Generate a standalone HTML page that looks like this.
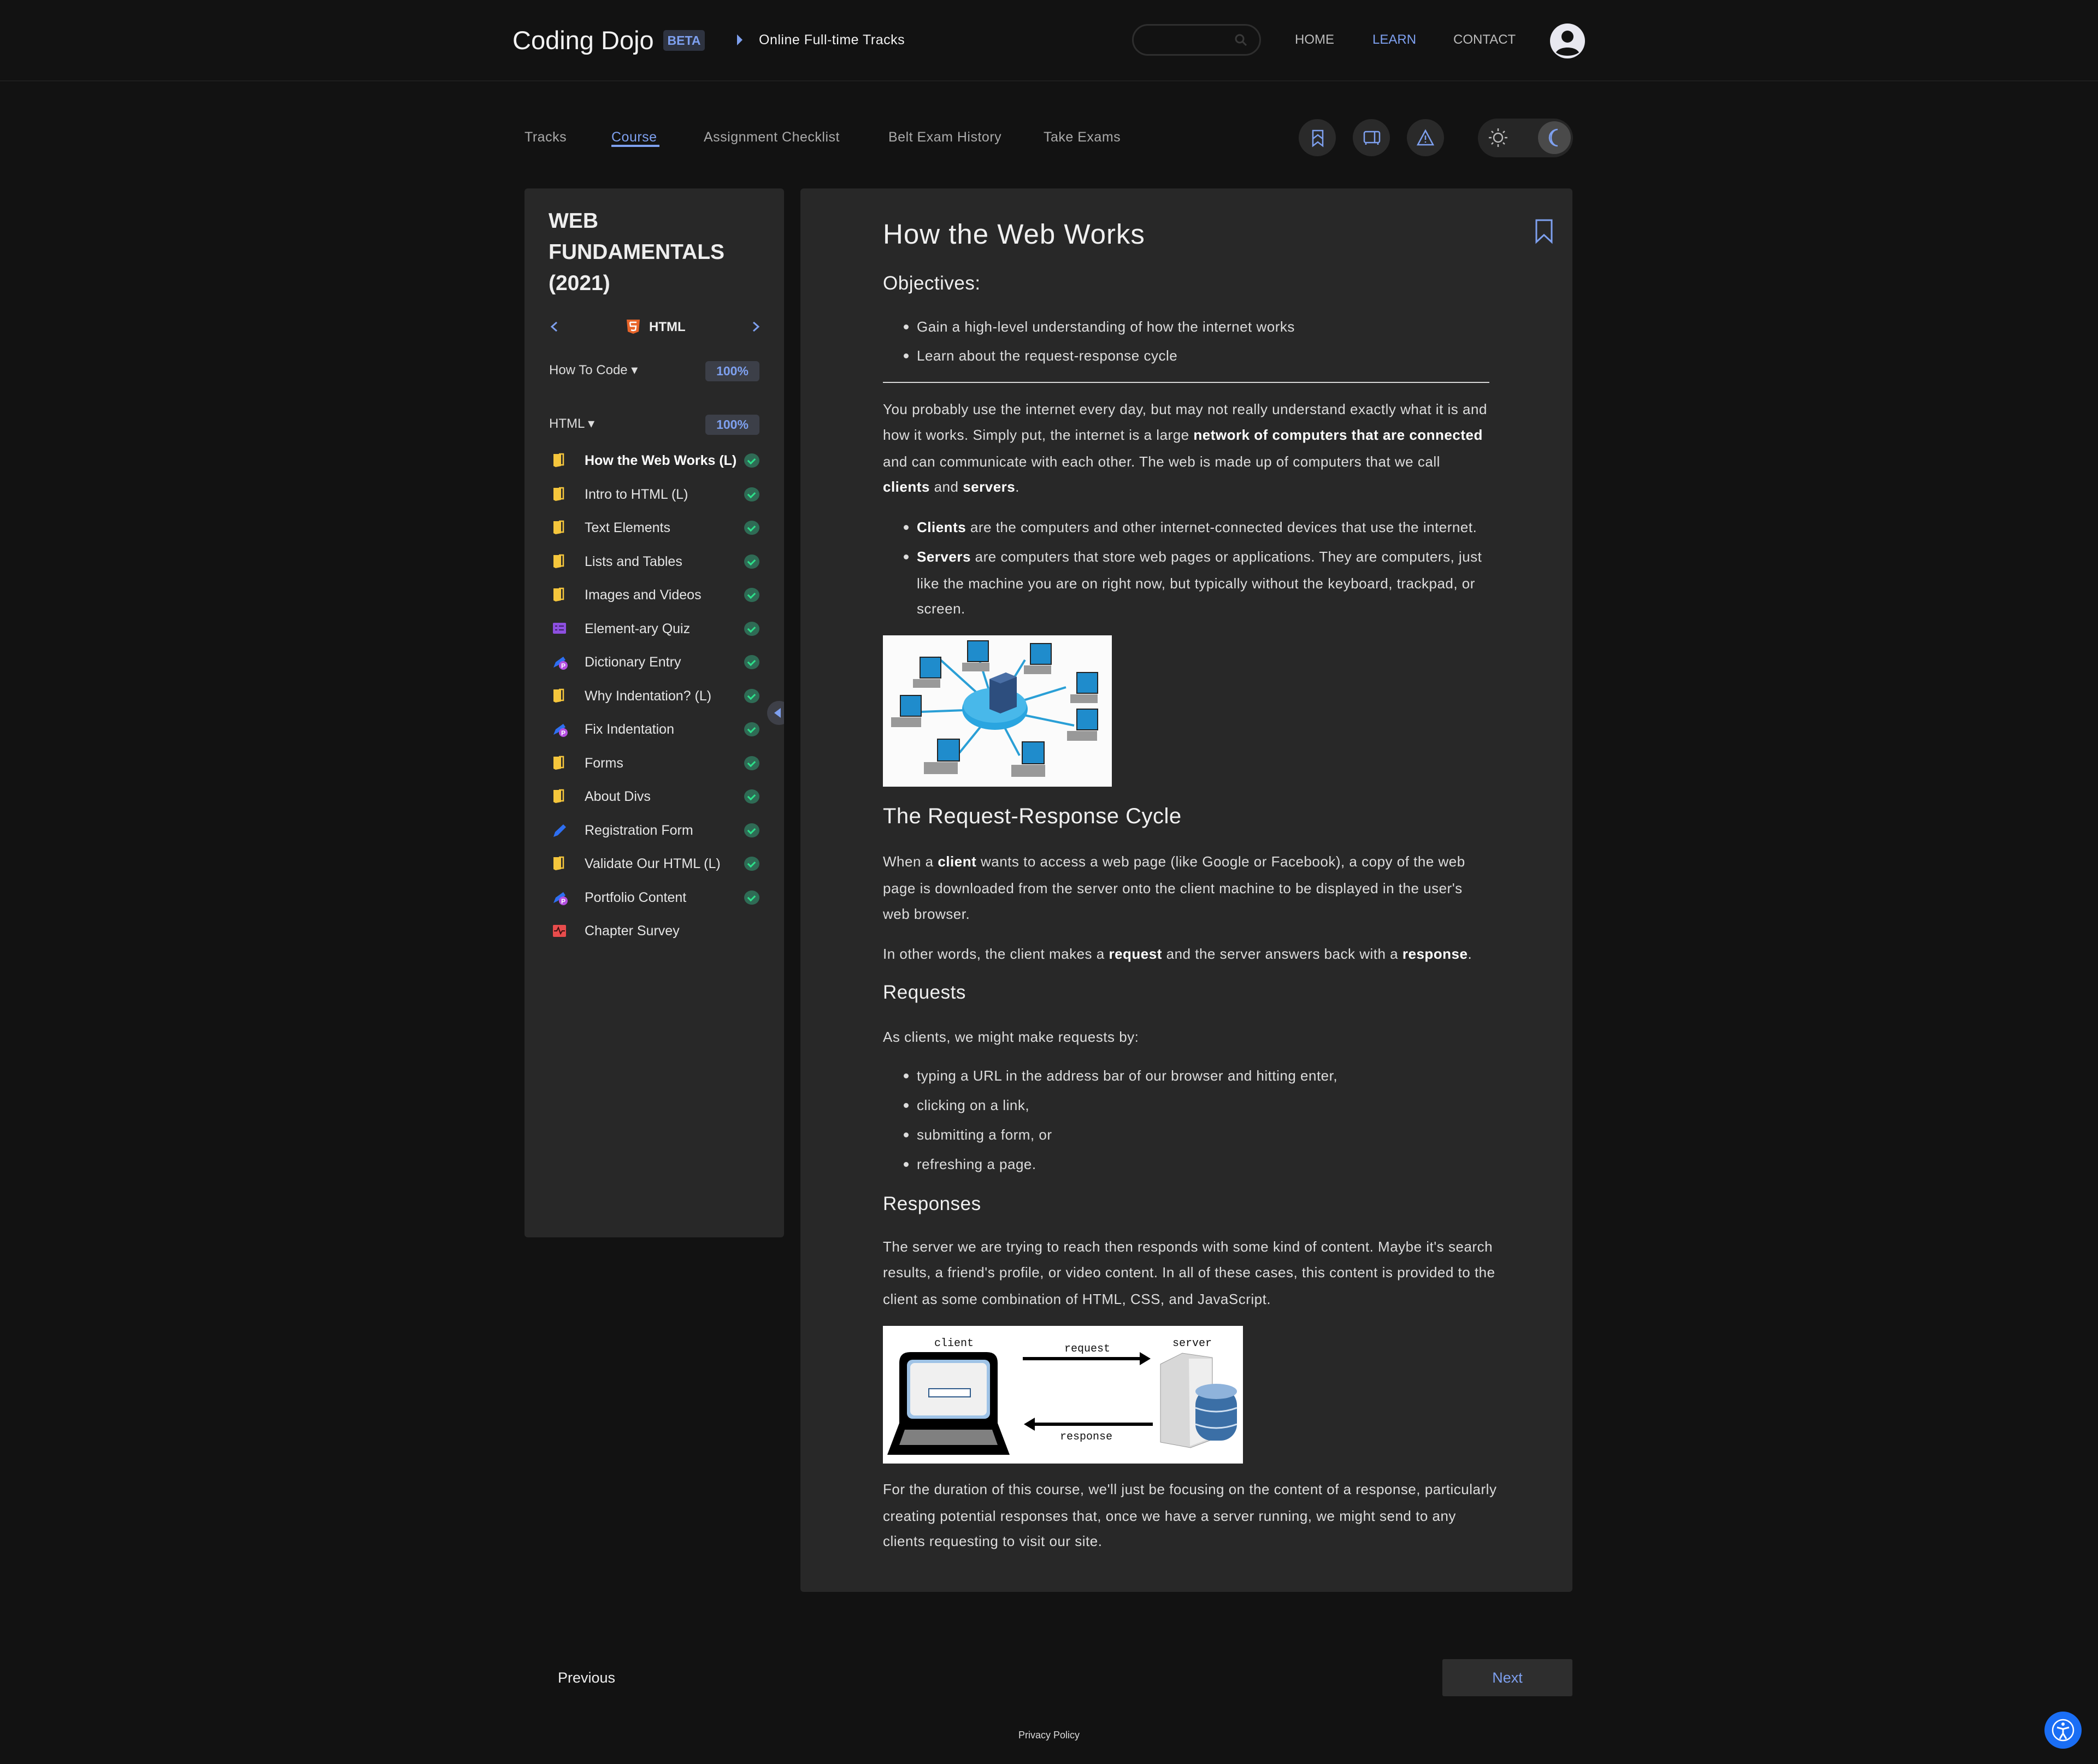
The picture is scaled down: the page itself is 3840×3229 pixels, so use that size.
<!DOCTYPE html>
<html><head><meta charset="utf-8">
<style>
*{margin:0;padding:0;box-sizing:border-box}
html,body{width:3840px;height:3229px;background:#121212;overflow:hidden;font-family:"Liberation Sans",sans-serif;color:#ddd}
.a{position:absolute;white-space:nowrap}
.t{position:absolute;white-space:nowrap;font-size:26px;letter-spacing:0.5px;line-height:48px;color:#ddd;left:1616px}
.t b{color:#fff}
.li{left:1678px}
.dot{position:absolute;width:9px;height:9px;border-radius:50%;background:#ddd;left:1654px}
.side{position:absolute;left:960px;top:345px;width:475px;height:1920px;background:#282828;border-radius:6px}
.main{position:absolute;left:1465px;top:345px;width:1413px;height:2569px;background:#282828;border-radius:6px}
.item{position:absolute;left:1070px;font-size:25px;line-height:40px;color:#e6e6e6;white-space:nowrap}
.chk{position:absolute;left:1362px;width:28px;height:26px;border-radius:50%;background:#2f6b55}
.chk:after{content:"";position:absolute;left:9px;top:6px;width:6px;height:10px;border:solid #2de08a;border-width:0 3px 3px 0;transform:rotate(45deg)}
.ic{position:absolute;left:1011px}
.circ{position:absolute;width:68px;height:68px;border-radius:50%;background:#2a2a2a;top:218px}
.tab{position:absolute;top:236px;font-size:25px;letter-spacing:0.5px;color:#aaa;line-height:30px;white-space:nowrap}
</style></head><body>
<!-- header -->
<div class="a" style="left:938px;top:44px;font-size:47px;color:#f2f2f2;line-height:60px">Coding Dojo</div>
<div class="a" style="left:1214px;top:55px;width:76px;height:38px;background:#2e3340;border-radius:5px;color:#7ea0ef;font-size:23px;font-weight:bold;text-align:center;line-height:38px">BETA</div>
<div class="a" style="left:1349px;top:63px;width:0;height:0;border-left:10px solid #7ea0ef;border-top:10px solid transparent;border-bottom:10px solid transparent"></div>
<div class="a" style="left:1389px;top:58px;font-size:25px;letter-spacing:0.5px;color:#f2f2f2;line-height:30px">Online Full-time Tracks</div>
<div class="a" style="left:2072px;top:44px;width:236px;height:58px;border:3px solid #2e2e2e;border-radius:29px"></div>
<svg class="a" style="left:2258px;top:60px" width="26" height="26" viewBox="0 0 26 26"><circle cx="11" cy="11" r="7" fill="none" stroke="#3a3a3a" stroke-width="3"/><path d="M16 16l7 7" stroke="#3a3a3a" stroke-width="3"/></svg>
<div class="a" style="left:2370px;top:58px;font-size:24px;color:#bbb;line-height:30px">HOME</div>
<div class="a" style="left:2512px;top:58px;font-size:24px;color:#7ea0ef;line-height:30px">LEARN</div>
<div class="a" style="left:2660px;top:58px;font-size:24px;color:#bbb;line-height:30px">CONTACT</div>
<svg class="a" style="left:2836px;top:42px" width="66" height="66" viewBox="0 0 66 66"><circle cx="33" cy="33" r="32" fill="#e8e8f0"/><circle cx="33" cy="25" r="11" fill="#121212"/><path d="M12 54c6-12 36-12 42 0c-10 8-32 8-42 0z" fill="#121212"/></svg>
<div class="a" style="left:0;top:147px;width:3840px;height:2px;background:#1e1e1e"></div>
<!-- tabs -->
<div class="tab" style="left:960px">Tracks</div>
<div class="tab" style="left:1119px;color:#7ea0ef">Course</div>
<div class="a" style="left:1119px;top:265px;width:88px;height:4px;background:#7ea0ef"></div>
<div class="tab" style="left:1288px">Assignment Checklist</div>
<div class="tab" style="left:1626px">Belt Exam History</div>
<div class="tab" style="left:1910px">Take Exams</div>
<div class="circ" style="left:2377px"></div><div class="circ" style="left:2476px"></div><div class="circ" style="left:2575px"></div>
<svg class="a" style="left:2398px;top:236px" width="28" height="34" viewBox="0 0 28 34"><path d="M5 3h18v28l-9-7-9 7z M5 18l9-7 9 7" fill="none" stroke="#7ea0ef" stroke-width="2.5"/></svg>
<svg class="a" style="left:2494px;top:238px" width="34" height="30" viewBox="0 0 34 30"><rect x="3" y="3" width="28" height="20" rx="3" fill="none" stroke="#7ea0ef" stroke-width="2.5"/><path d="M22 3v20M6 23v4M28 23v4" stroke="#7ea0ef" stroke-width="2.5"/></svg>
<svg class="a" style="left:2592px;top:236px" width="34" height="32" viewBox="0 0 34 32"><path d="M17 3L31 29H3z M17 12v8M17 23v2" fill="none" stroke="#7ea0ef" stroke-width="2.5"/></svg>
<div class="a" style="left:2705px;top:217px;width:174px;height:71px;border-radius:36px;background:#262626"></div>
<svg class="a" style="left:2722px;top:232px" width="40" height="40" viewBox="0 0 40 40"><circle cx="20" cy="20" r="8" fill="none" stroke="#bbb" stroke-width="2.5"/><path d="M20 3v5M20 32v5M3 20h5M32 20h5M8 8l3 3M29 29l3 3M8 32l3-3M29 11l3-3" stroke="#bbb" stroke-width="2.5"/></svg>
<div class="a" style="left:2815px;top:222px;width:60px;height:60px;border-radius:50%;background:#4a4a4a"></div>
<svg class="a" style="left:2825px;top:232px" width="40" height="40" viewBox="0 0 40 40"><path d="M26 5a15 15 0 1 0 0 30a12 15 0 0 1 0-30z" fill="none" stroke="#7ea0ef" stroke-width="2.5"/></svg>
<!-- sidebar -->
<div class="side"></div>
<div class="a" style="left:1004px;top:376px;font-size:39px;line-height:57px;color:#eee;font-weight:bold;white-space:normal">WEB<br>FUNDAMENTALS<br>(2021)</div>
<svg class="a" style="left:1006px;top:587px" width="16" height="22" viewBox="0 0 16 22"><path d="M13 3L4 11l9 8" fill="none" stroke="#7ea0ef" stroke-width="3"/></svg>
<svg class="a" style="left:1376px;top:587px" width="16" height="22" viewBox="0 0 16 22"><path d="M3 3l9 8-9 8" fill="none" stroke="#7ea0ef" stroke-width="3"/></svg>
<svg class="a" style="left:1146px;top:584px" width="26" height="28" viewBox="0 0 26 28"><path d="M1 1h24l-2 22-10 4-10-4z" fill="#e8652a"/><path d="M7 6h12M7 6l1 7h10l-1 7-4 1-4-1" fill="none" stroke="#fff" stroke-width="2.5"/></svg>
<div class="a" style="left:1188px;top:584px;font-size:24px;color:#eee;font-weight:bold;line-height:30px">HTML</div>
<div class="a" style="left:1005px;top:663px;font-size:24px;color:#ddd;line-height:30px">How To Code ▾</div>
<div class="a" style="left:1291px;top:661px;width:99px;height:37px;border-radius:6px;background:#3c3f48;color:#7ea0ef;font-size:23px;font-weight:bold;text-align:center;line-height:37px">100%</div>
<div class="a" style="left:1005px;top:761px;font-size:24px;color:#ddd;line-height:30px">HTML ▾</div>
<div class="a" style="left:1291px;top:759px;width:99px;height:37px;border-radius:6px;background:#3c3f48;color:#7ea0ef;font-size:23px;font-weight:bold;text-align:center;line-height:37px">100%</div>

<div class="item" style="top:823px;font-weight:bold;color:#fff">How the Web Works (L)</div>
<div class="item" style="top:885px">Intro to HTML (L)</div>
<div class="item" style="top:946px">Text Elements</div>
<div class="item" style="top:1008px">Lists and Tables</div>
<div class="item" style="top:1069px">Images and Videos</div>
<div class="item" style="top:1131px">Element-ary Quiz</div>
<div class="item" style="top:1192px">Dictionary Entry</div>
<div class="item" style="top:1254px">Why Indentation? (L)</div>
<div class="item" style="top:1315px">Fix Indentation</div>
<div class="item" style="top:1377px">Forms</div>
<div class="item" style="top:1438px">About Divs</div>
<div class="item" style="top:1500px">Registration Form</div>
<div class="item" style="top:1561px">Validate Our HTML (L)</div>
<div class="item" style="top:1623px">Portfolio Content</div>
<div class="item" style="top:1684px">Chapter Survey</div>
<div class="chk" style="top:830px"></div><div class="chk" style="top:892px"></div><div class="chk" style="top:953px"></div><div class="chk" style="top:1015px"></div><div class="chk" style="top:1076px"></div><div class="chk" style="top:1138px"></div><div class="chk" style="top:1199px"></div><div class="chk" style="top:1261px"></div><div class="chk" style="top:1322px"></div><div class="chk" style="top:1384px"></div><div class="chk" style="top:1445px"></div><div class="chk" style="top:1507px"></div><div class="chk" style="top:1568px"></div><div class="chk" style="top:1630px"></div>
<svg width="0" height="0" style="position:absolute"><defs>
<g id="bk"><path d="M2 2h14v22l-10 2-4-2z" fill="#f5c63c"/><path d="M12 2h8v20h-6" fill="none" stroke="#f5c63c" stroke-width="2.5"/></g>
<g id="pp"><path d="M2 24l4-10 14-10 4 6-14 10z" fill="#2e6ff2"/><circle cx="20" cy="20" r="8" fill="#b44fe0"/><text x="16" y="25" font-size="12" font-family="Liberation Sans" font-weight="bold" fill="#fff">P</text></g>
</defs></svg>
<svg class="ic" style="top:829px" width="26" height="28"><use href="#bk"/></svg>
<svg class="ic" style="top:891px" width="26" height="28"><use href="#bk"/></svg>
<svg class="ic" style="top:952px" width="26" height="28"><use href="#bk"/></svg>
<svg class="ic" style="top:1014px" width="26" height="28"><use href="#bk"/></svg>
<svg class="ic" style="top:1075px" width="26" height="28"><use href="#bk"/></svg>
<svg class="ic" style="top:1138px" width="26" height="26"><rect x="1" y="2" width="24" height="20" rx="2" fill="#8d4fe0"/><path d="M5 8h4M12 8h9M5 15h4M12 15h9" stroke="#3a2060" stroke-width="2"/></svg>
<svg class="ic" style="top:1198px" width="30" height="28"><use href="#pp"/></svg>
<svg class="ic" style="top:1260px" width="26" height="28"><use href="#bk"/></svg>
<svg class="ic" style="top:1321px" width="30" height="28"><use href="#pp"/></svg>
<svg class="ic" style="top:1383px" width="26" height="28"><use href="#bk"/></svg>
<svg class="ic" style="top:1444px" width="26" height="28"><use href="#bk"/></svg>
<svg class="ic" style="top:1506px" width="28" height="28"><path d="M2 26l3-9 15-14 5 5-15 15z" fill="#2e6ff2"/></svg>
<svg class="ic" style="top:1567px" width="26" height="28"><use href="#bk"/></svg>
<svg class="ic" style="top:1629px" width="30" height="28"><use href="#pp"/></svg>
<svg class="ic" style="top:1692px" width="26" height="24"><rect x="1" y="1" width="24" height="22" rx="2" fill="#e84c4c"/><path d="M3 12h5l3-6 4 11 3-5h5" fill="none" stroke="#3a1010" stroke-width="2"/></svg>
<div class="a" style="left:1404px;top:1283px;width:44px;height:44px;border-radius:50%;background:#3e4048"></div>
<div class="a" style="left:1417px;top:1296px;width:0;height:0;border-right:12px solid #7ea0ef;border-top:9px solid transparent;border-bottom:9px solid transparent"></div>
<div class="a" style="left:1435px;top:1270px;width:30px;height:70px;background:#121212"></div>

<!-- main -->
<div class="main"></div>
<svg class="a" style="left:2808px;top:400px" width="36" height="48" viewBox="0 0 36 48"><path d="M4 3h28v40L18 30 4 43z" fill="none" stroke="#7ea0ef" stroke-width="3"/></svg>
<div class="t" style="top:397px;font-size:51px;letter-spacing:1px;line-height:64px;color:#f0f0f0;font-weight:500">How the Web Works</div>
<div class="t" style="top:497px;font-size:35px;line-height:44px;color:#f0f0f0;font-weight:500">Objectives:</div>
<div class="dot" style="top:594px"></div><div class="t li" style="top:574px">Gain a high-level understanding of how the internet works</div>
<div class="dot" style="top:647px"></div><div class="t li" style="top:627px">Learn about the request-response cycle</div>
<div class="a" style="left:1616px;top:699px;width:1110px;height:2px;background:#d8d8d8"></div>
<div class="t" style="top:725px">You probably use the internet every day, but may not really understand exactly what it is and</div>
<div class="t" style="top:772px">how it works. Simply put, the internet is a large <b>network of computers that are connected</b></div>
<div class="t" style="top:821px">and can communicate with each other. The web is made up of computers that we call</div>
<div class="t" style="top:867px"><b>clients</b> and <b>servers</b>.</div>
<div class="dot" style="top:961px"></div><div class="t li" style="top:941px"><b>Clients</b> are the computers and other internet-connected devices that use the internet.</div>
<div class="dot" style="top:1015px"></div><div class="t li" style="top:995px"><b>Servers</b> are computers that store web pages or applications. They are computers, just</div>
<div class="t li" style="top:1044px">like the machine you are on right now, but typically without the keyboard, trackpad, or</div>
<div class="t li" style="top:1090px">screen.</div>
<svg class="a" style="left:1616px;top:1163px" width="419" height="277" viewBox="0 0 419 277">
<rect width="419" height="277" fill="#fbfbfb"/>
<g stroke="#2a9fd6" stroke-width="4">
<path d="M205 135L100 40M205 135L175 40M205 135L260 45M205 135L335 95M205 135L70 140M205 135L350 165M205 135L140 215M205 135L250 220"/></g>
<ellipse cx="205" cy="135" rx="60" ry="38" fill="#2aa5e0"/>
<ellipse cx="205" cy="128" rx="58" ry="32" fill="#48b8ea"/>
<path d="M195 80l30-12 20 8v55l-30 12-20-8z" fill="#2d4e7e"/><path d="M195 80l30-12 20 8-30 12z" fill="#4a6fa5"/>
<g fill="#1f8ccc" stroke="#222" stroke-width="2">
<rect x="68" y="40" width="38" height="38"/><rect x="155" y="10" width="38" height="38"/><rect x="270" y="15" width="38" height="38"/><rect x="355" y="68" width="38" height="38"/><rect x="32" y="110" width="38" height="38"/><rect x="355" y="135" width="38" height="38"/><rect x="100" y="190" width="40" height="40"/><rect x="255" y="195" width="40" height="40"/></g>
<g fill="#999"><rect x="55" y="80" width="50" height="16"/><rect x="145" y="50" width="50" height="16"/><rect x="258" y="55" width="50" height="16"/><rect x="343" y="108" width="50" height="16"/><rect x="15" y="150" width="55" height="18"/><rect x="337" y="175" width="55" height="18"/><rect x="75" y="232" width="62" height="22"/><rect x="235" y="237" width="62" height="22"/></g>
</svg>
<div class="t" style="top:1470px;font-size:40px;line-height:48px;color:#f0f0f0;font-weight:500">The Request-Response Cycle</div>
<div class="t" style="top:1553px">When a <b>client</b> wants to access a web page (like Google or Facebook), a copy of the web</div>
<div class="t" style="top:1602px">page is downloaded from the server onto the client machine to be displayed in the user's</div>
<div class="t" style="top:1649px">web browser.</div>
<div class="t" style="top:1722px">In other words, the client makes a <b>request</b> and the server answers back with a <b>response</b>.</div>
<div class="t" style="top:1795px;font-size:35px;line-height:44px;color:#f0f0f0;font-weight:500">Requests</div>
<div class="t" style="top:1874px">As clients, we might make requests by:</div>
<div class="dot" style="top:1965px"></div><div class="t li" style="top:1945px">typing a URL in the address bar of our browser and hitting enter,</div>
<div class="dot" style="top:2019px"></div><div class="t li" style="top:1999px">clicking on a link,</div>
<div class="dot" style="top:2073px"></div><div class="t li" style="top:2053px">submitting a form, or</div>
<div class="dot" style="top:2127px"></div><div class="t li" style="top:2107px">refreshing a page.</div>
<div class="t" style="top:2182px;font-size:35px;line-height:44px;color:#f0f0f0;font-weight:500">Responses</div>
<div class="t" style="top:2258px">The server we are trying to reach then responds with some kind of content. Maybe it's search</div>
<div class="t" style="top:2305px">results, a friend's profile, or video content. In all of these cases, this content is provided to the</div>
<div class="t" style="top:2354px">client as some combination of HTML, CSS, and JavaScript.</div>
<svg class="a" style="left:1616px;top:2427px" width="659" height="252" viewBox="0 0 659 252">
<rect width="659" height="252" fill="#fff"/>
<g font-family="Liberation Mono" font-size="20" fill="#111"><text x="94" y="37">client</text><text x="332" y="47">request</text><text x="530" y="37">server</text><text x="324" y="208">response</text></g>
<path d="M30 68q0-20 20-20h140q20 0 20 20v110H30z" fill="#000"/>
<rect x="44" y="62" width="152" height="108" rx="10" fill="#9fc3e6"/><rect x="50" y="68" width="140" height="96" rx="8" fill="#f0f0f0"/>
<rect x="84" y="115" width="76" height="15" fill="#fff" stroke="#2e5a8a" stroke-width="2"/>
<path d="M30 178h180l22 58H8z" fill="#000"/><path d="M40 190h160l10 28H30z" fill="#808080"/>
<path d="M256 60h220" stroke="#000" stroke-width="6"/><path d="M470 48l20 12-20 12z" fill="#000"/>
<path d="M274 180h220" stroke="#000" stroke-width="6"/><path d="M278 168l-20 12 20 12z" fill="#000"/>
<path d="M508 70l40-20 55 8v150l-40 15-55-10z" fill="#d8d8d8" stroke="#999"/>
<path d="M560 60l42 0v145l-40 15z" fill="#eee"/>
<rect x="572" y="115" width="76" height="95" rx="30" fill="#3b6fa6"/>
<ellipse cx="610" cy="120" rx="38" ry="14" fill="#8fb3db"/>
<path d="M572 150q38 14 76 0M572 180q38 14 76 0" fill="none" stroke="#cfe0f2" stroke-width="3"/>
</svg>
<div class="t" style="top:2702px">For the duration of this course, we'll just be focusing on the content of a response, particularly</div>
<div class="t" style="top:2751px">creating potential responses that, once we have a server running, we might send to any</div>
<div class="t" style="top:2797px">clients requesting to visit our site.</div>

<div class="a" style="left:1021px;top:3054px;font-size:27px;color:#eee;line-height:34px">Previous</div>
<div class="a" style="left:2640px;top:3037px;width:238px;height:68px;background:#2e2e2e;border-radius:3px;color:#7ea0ef;font-size:27px;text-align:center;line-height:68px">Next</div>
<div class="a" style="left:1860px;top:3164px;width:120px;font-size:18px;color:#ddd;text-align:center;line-height:24px">Privacy Policy</div>
<div class="a" style="left:3742px;top:3133px;width:68px;height:68px;border-radius:50%;background:#1a6ef5"></div>
<svg class="a" style="left:3752px;top:3143px" width="48" height="48" viewBox="0 0 48 48"><circle cx="24" cy="24" r="19" fill="none" stroke="#fff" stroke-width="2.5"/><circle cx="24" cy="13" r="3" fill="#fff"/><path d="M13 19l11 3 11-3M24 22v8l-6 10M24 30l6 10" fill="none" stroke="#fff" stroke-width="3"/></svg>
</body></html>
